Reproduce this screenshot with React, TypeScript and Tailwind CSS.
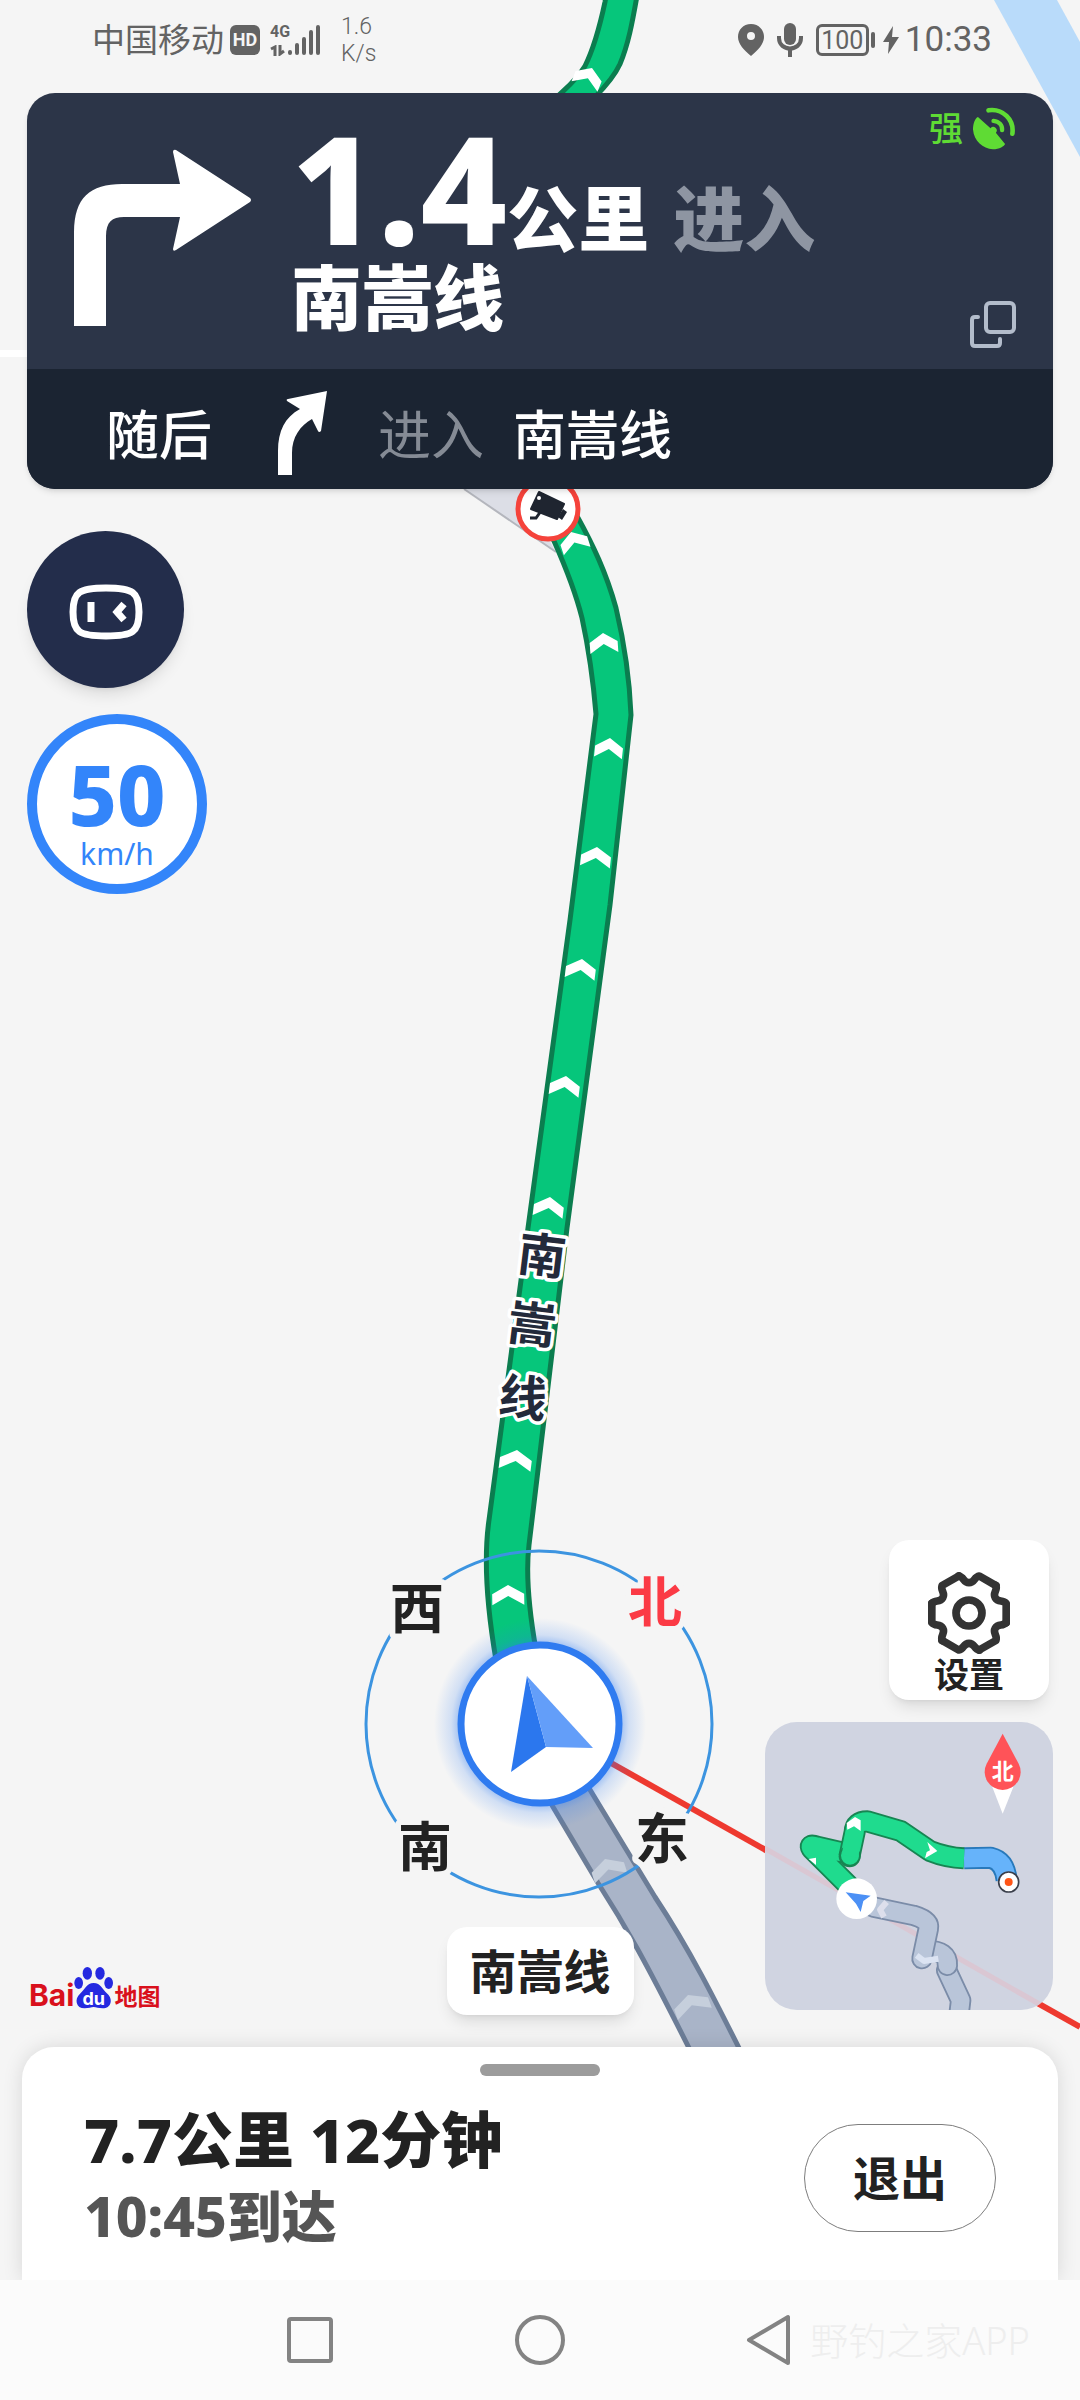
/** A white direction mark painted on the route line */
function Chevron({ x, y, angle, half = 15 }: { x: number; y: number; angle: number; half?: number }) {
  return (
    <path
      d={`M0 0L${half} 9V20L0 11L${-half} 20V9Z`}
      transform={`translate(${x} ${y}) rotate(${angle})`}
    />
  );
}

const routeMarks = [
  { x: 592, y: 68, angle: 22, half: 14 },
  { x: 571, y: 532, angle: -18, half: 14 },
  { x: 603, y: 633, angle: -4, half: 14 },
  { x: 610, y: 738, angle: 6, half: 14 },
  { x: 597, y: 847, angle: 6, half: 15 },
  { x: 582, y: 959, angle: 7, half: 15 },
  { x: 566, y: 1076, angle: 7, half: 15 },
  { x: 550, y: 1197, angle: 7, half: 15 },
  { x: 517, y: 1450, angle: 7, half: 16 },
  { x: 508, y: 1585, angle: -1, half: 16 },
];

const roadName = [
  { char: "南", x: 542, y: 1256 },
  { char: "嵩", x: 532, y: 1325 },
  { char: "线", x: 523, y: 1398 },
];

const compass = [
  { char: "西", x: 417, y: 1609, className: "fill-[#222222]" },
  { char: "北", x: 655, y: 1602, className: "fill-[#fb3a45]" },
  { char: "南", x: 425, y: 1847, className: "fill-[#222222]" },
  { char: "东", x: 662, y: 1839, className: "fill-[#222222]" },
];

/** Full-bleed navigation map behind all of the panels */
function MapCanvas() {
  return (
    <svg
      className="absolute inset-0 h-full w-full"
      viewBox="0 0 1080 2400"
      preserveAspectRatio="xMidYMin slice"
      aria-label="导航地图"
    >
      <defs>
        <radialGradient id="glow">
          <stop offset="0.72" stopColor="#2f7bf0" stopOpacity="0.55" />
          <stop offset="0.84" stopColor="#2f7bf0" stopOpacity="0.18" />
          <stop offset="1" stopColor="#2f7bf0" stopOpacity="0" />
        </radialGradient>
      </defs>

      {/* river and side roads */}
      <path d="M994 0H1057L1080 42V157Z" fill="#b9dbfa" />
      <path d="M0 350H40V357H0Z" fill="#ffffff" />
      <path d="M464 489H520L556 552Z" fill="#dcdee6" />
      <path d="M464 489L556 552" stroke="#b4b6bd" strokeWidth="2" />

      {/* route ahead */}
      <g fill="#06c67b" stroke="#0b7d4f" strokeWidth="5">
        <path d="M607 -10L605 2C599 30 594 48 585 66C575 82 566 88 556 98H594C604 88 615 75 620 64C628 45 632 25 638 -10Z" />
        <path d="M530 500L554 541C566 568 575 590 582 618C590 655 594 690 596 714L570 920L528 1228L489 1520C485 1548 484 1590 496 1660L536 1650C529 1610 526 1570 529 1545L567 1228L610 905L631 715C630 690 626 650 616 608C606 572 593 545 577 516L560 490Z" />
      </g>
      <g fill="#ffffff">
        {routeMarks.map((mark) => (
          <Chevron key={mark.y} {...mark} />
        ))}
      </g>

      {/* route already driven */}
      <path
        d="M540 1785L598 1883C625 1925 645 1960 692 2054H742C715 2000 690 1950 655 1897L575 1765Z"
        fill="#a9b4c8"
        stroke="#6c7d97"
        strokeWidth="5"
      />
      <g fill="#c6cfdc">
        <Chevron x={605} y={1859} angle={-18} half={17} />
        <Chevron x={688} y={1995} angle={-20} half={18} />
      </g>

      {/* speed camera */}
      <circle cx="548" cy="509" r="30" fill="#ffffff" stroke="#f5433b" strokeWidth="5" />
      <g fill="#1f2530">
        <path d="M539 492L564 504L557 519L531 509Z" strokeWidth="2" stroke="#1f2530" strokeLinejoin="round" />
        <path d="M563 509L567 512L562 520L558 517Z" />
        <path d="M530 518H536L541 511" fill="none" stroke="#1f2530" strokeWidth="3" />
        <circle cx="539" cy="498" r="2" fill="#ffffff" />
      </g>

      {/* bearing line to the destination */}
      <path d="M540 1723L1080 2027" stroke="#ee392f" strokeWidth="6" />

      <g
        fontSize="48"
        fontWeight="700"
        fill="#232a3b"
        stroke="#ffffff"
        strokeWidth="7"
        strokeLinejoin="round"
        textAnchor="middle"
        paintOrder="stroke"
      >
        {roadName.map(({ char, x, y }) => (
          <text key={char} dy="17" transform={`translate(${x} ${y}) rotate(7)`}>
            {char}
          </text>
        ))}
      </g>

      {/* compass ring and current position */}
      <circle cx="539" cy="1724" r="173" fill="none" stroke="#3c94e0" strokeWidth="3" />
      <g
        fontSize="54"
        fontWeight="700"
        stroke="#f5f5f5"
        strokeWidth="12"
        strokeLinejoin="round"
        textAnchor="middle"
        paintOrder="stroke"
      >
        {compass.map(({ char, x, y, className }) => (
          <text key={char} x={x} y={y + 20} className={className}>
            {char}
          </text>
        ))}
      </g>
      <circle cx="540" cy="1724" r="106" fill="url(#glow)" />
      <circle cx="540" cy="1724" r="79" fill="#ffffff" stroke="#2f7bf0" strokeWidth="7" />
      <path d="M527 1676L511 1772L546 1747Z" fill="#2b77ee" />
      <path d="M527 1676L593 1748L546 1747Z" fill="#639ef9" />
    </svg>
  );
}

function StatusBar() {
  return (
    <header className="flex h-[93px] items-start justify-between pt-3 pr-[88px] pl-[92px] text-[#636363]">
      <div className="flex h-14 items-center">
        <span className="text-[33px] leading-10">中国移动</span>
        <span className="ml-1.5 flex h-[30px] w-[30px] items-center justify-center rounded-md bg-[#636363] font-[Roboto] text-lg font-bold text-[#f5f5f5]">
          HD
        </span>
        <div className="ml-2.5 flex h-8 items-end">
          <div className="flex h-8 w-[17px] flex-col justify-between">
            <span className="font-[Roboto] text-[16px] leading-4 font-bold">4G</span>
            <svg className="h-[11px] w-[15px]" viewBox="0 0 15 11" fill="none" stroke="currentColor" strokeWidth="3">
              <path d="M1 4L5 2V11M10 0V9L14 6" />
            </svg>
          </div>
          <svg className="h-8 w-[34px]" viewBox="0 0 34 32" stroke="currentColor" strokeWidth="4" strokeLinecap="round">
            <path d="M3 29V28M10 29V21M17 29V15M24 29V8M31 29V3" />
          </svg>
        </div>
        <p className="ml-5 w-10 font-[Roboto] text-[23px] leading-[27px] font-light">
          1.6
          <br />
          K/s
        </p>
      </div>
      <div className="flex h-14 items-center">
        <svg className="h-8 w-[26px]" viewBox="0 0 26 32" fill="currentColor">
          <path fillRule="evenodd" d="M13 0C5 0 0 6 0 13C0 20 6 26 13 32C20 26 26 20 26 13C26 6 21 0 13 0ZM13 8A4 4 0 1 1 13 16A4 4 0 1 1 13 8Z" />
        </svg>
        <svg className="ml-3 h-[34px] w-7" viewBox="0 0 28 34" fill="none" stroke="currentColor">
          <rect x="8" y="0" width="12" height="22" rx="6" fill="currentColor" stroke="none" />
          <path d="M3 13V15C3 29 25 29 25 15V13M14 26V34" strokeWidth="4" />
        </svg>
        <span className="ml-3 flex h-8 w-[53px] items-center justify-center rounded-md border-3 border-[#636363] font-[Roboto] text-[25px] leading-none">
          100
        </span>
        <span className="ml-0.5 h-4 w-1 rounded-sm bg-[#636363]" />
        <svg className="ml-2 h-7 w-4" viewBox="0 0 16 28" fill="currentColor">
          <path d="M10 0L0 16H6L5 28L16 11H9Z" />
        </svg>
        <time className="ml-1.5 font-[Roboto] text-[35px] leading-[44px]">10:33</time>
      </div>
    </header>
  );
}

function SatelliteIcon() {
  return (
    <svg className="h-[43px] w-[43px]" viewBox="1115 322 130 130" fill="none" stroke="#5fdb34" strokeWidth="14" strokeLinecap="round">
      <path
        d="M1130 352L1168 386A10 10 0 0 1 1184 400L1212 434C1210 440 1195 450 1175 450C1145 448 1118 425 1115 390C1115 370 1122 355 1130 352Z"
        fill="#5fdb34"
        stroke="none"
      />
      <path d="M1177 364C1195 366 1204 378 1203 392" strokeWidth="13" />
      <path d="M1162 332C1205 326 1240 360 1234 403" strokeWidth="14" />
    </svg>
  );
}

/** Next manoeuvre card with the follow-up turn underneath */
function GuidanceCard() {
  return (
    <section className="mx-[27px] overflow-hidden rounded-[28px] bg-[#2c3548] text-white shadow-md">
      <div className="flex h-[276px] pr-[37px] pl-[47px]">
        <svg className="mt-[56px] h-[178px] w-[178px] shrink-0" viewBox="74 149 178 178" fill="#ffffff" role="img" aria-label="右转">
          <path d="M74 326V232C74 198 90 184 122 184H180L173 152Q173 149 176 150L250 198Q252 200 250 202L176 250Q173 252 173 249L180 217H124C112 217 106 222 106 236V326Z" />
        </svg>
        <div className="ml-[39px] flex-1 pt-[34px] font-extrabold">
          <h1 className="flex h-32 items-baseline text-[71px] leading-[120px]">
            <span className="text-[150px]">1.4</span>
            公里
            <span className="ml-6 text-[#8e95a2]">进入</span>
          </h1>
          <p className="text-[71px] leading-[84px]">南嵩线</p>
        </div>
        <div className="flex flex-col items-end justify-between pt-2.5 pb-5">
          <div className="flex items-center gap-2.5 text-[34px] font-medium text-[#5fdb34]">
            强
            <SatelliteIcon />
          </div>
          <button type="button" aria-label="切换视图">
            <svg className="h-12 w-12" viewBox="0 0 48 48" fill="none" stroke="#b3bccb" strokeWidth="4" strokeLinecap="round">
              <rect x="18" y="2" width="28" height="29" rx="4" />
              <path d="M10 16H7Q4 16 4 19V42Q4 45 7 45H29Q32 45 32 42V38" />
            </svg>
          </button>
        </div>
      </div>
      <div className="flex h-[120px] items-center bg-[#1b2432] pt-3 pl-[79px] text-[53px] font-medium">
        <span>随后</span>
        <svg className="mb-1 ml-[66px] h-[84px] w-[50px]" viewBox="278 390 50 84" fill="#ffffff" role="img" aria-label="右前方">
          <path d="M278 474V450C278 430 285 416 300 408L287 400Q286 398 288 398L327 390L321 430Q319 432 318 430L312 418C300 425 292 436 292 452V474Z" />
        </svg>
        <span className="ml-[50px] font-normal text-[#858b95]">进入</span>
        <span className="ml-[29px]">南嵩线</span>
      </div>
    </section>
  );
}

const gearAngles = [0, 60, 120, 180, 240, 300];

function SettingsButton() {
  return (
    <button
      type="button"
      className="mr-1 flex h-40 w-40 flex-col items-center justify-end rounded-[20px] bg-white pb-1 text-[#222222] shadow-lg"
    >
      <svg className="h-[82px] w-[82px]" viewBox="-123 -123 246 246" fill="none" stroke="#333333" strokeWidth="23" strokeLinecap="round" strokeLinejoin="round">
        <circle r="39" />
        {gearAngles.map((angle) => (
          <path key={angle} d="M-31 -111C-14 -108 -18 -91 0 -91C18 -91 14 -108 31 -111L81 -82" transform={`rotate(${angle})`} />
        ))}
      </svg>
      <span className="text-[35px] leading-[42px] font-bold">设置</span>
    </button>
  );
}

const drivenLine = ["M655 1500L662 1440L620 1350", "M560 1290Q625 1290 622 1335", "M400 1160L520 1185Q570 1200 565 1225L546 1315"];
const aheadLine = ["M330 1100L215 985Q205 970 232 979L310 997", "M328 1010L344 935Q345 903 382 903L482 932L570 992Q620 1012 672 1014"];

/** Route overview in the lower right corner */
function MiniMap() {
  return (
    <button type="button" aria-label="路线全览" className="h-72 w-72 overflow-hidden rounded-[32px] bg-[#d0d4e1]">
      <svg className="h-full w-full" viewBox="75 605 864 864" fill="none" strokeLinejoin="round">
        <path d="M60 976L940 1475" stroke="#dac7d3" strokeWidth="16" />
        {drivenLine.map((d) => (
          <g key={d} strokeLinecap="round">
            <path d={d} stroke="#7b8ca8" strokeWidth="64" />
            <path d={d} stroke="#b9c5d9" strokeWidth="53" />
          </g>
        ))}
        <path d="M440 1145L420 1168L432 1190" stroke="#dddfec" strokeWidth="18" />
        <path d="M530 1305L552 1322L595 1315" stroke="#dbe3f2" strokeWidth="18" />

        <path d="M672 1014L752 1012Q795 1022 800 1080" stroke="#2879bb" strokeWidth="66" />
        <path d="M672 1014L752 1012Q795 1022 800 1080" stroke="#66b3fa" strokeWidth="55" />
        {aheadLine.map((d) => (
          <g key={d}>
            <path d={d} stroke="#178552" strokeWidth="66" />
            <path d={d} stroke="#1fdb8e" strokeWidth="55" />
          </g>
        ))}
        <circle cx="329" cy="1008" r="33" fill="#178552" />
        <circle cx="330" cy="1006" r="27" fill="#1fdb8e" />
        <path d="M344 925L330 1008" stroke="#1fdb8e" strokeWidth="50" />
        <g fill="#ffffff">
          <path d="M320 908L345 890L362 900V932L342 918L322 928Z" />
          <path d="M562 965L592 992L555 1014L560 995L570 990Z" />
          <path d="M206 1016L228 1012V1034Z" />
        </g>

        <circle cx="806" cy="1085" r="30" fill="#ffffff" stroke="#3a3f4b" strokeWidth="5" />
        <circle cx="806" cy="1085" r="12" fill="#ff5517" />
        <circle cx="350" cy="1135" r="61" fill="#ffffff" />
        <path d="M317 1116L392 1126L370 1142L362 1175L348 1150Z" fill="#4c90f5" />

        <path d="M757 800H820L788 880Z" fill="#ffffff" />
        <path d="M788 640L836 730A54 54 0 1 1 740 730Z" fill="#ff5358" />
        <text x="788" y="775" fontSize="66" fontWeight="700" fill="#ffffff" textAnchor="middle">
          北
        </text>
      </svg>
    </button>
  );
}

function BaiduLogo() {
  return (
    <div className="mb-1.5 ml-0.5 flex items-end text-[#d9101c]">
      <span className="font-[Inter] text-[30px] leading-[27px] font-bold">Bai</span>
      <svg className="h-[42px] w-10" viewBox="0 0 120 126" fill="#2529e0">
        <ellipse cx="14" cy="48" rx="13" ry="18" />
        <ellipse cx="40" cy="19" rx="14" ry="19" />
        <ellipse cx="78" cy="19" rx="14" ry="19" />
        <ellipse cx="104" cy="48" rx="13" ry="18" />
        <path d="M59 48C80 48 85 68 100 80C118 96 112 124 86 124C74 124 66 120 59 120C52 120 44 124 32 124C6 124 0 96 18 80C33 68 38 48 59 48Z" />
        <text x="59" y="113" fontSize="54" fontWeight="700" fill="#ffffff" textAnchor="middle" fontFamily="Inter">
          du
        </text>
      </svg>
      <span className="text-[23px] leading-[26px] font-bold">地图</span>
    </div>
  );
}

function TripSheet() {
  return (
    <section className="mx-[22px] rounded-t-[32px] bg-white pt-[17px] shadow-[0_0_20px_rgba(0,0,0,0.12)]">
      <div className="mx-auto h-3 w-[120px] rounded-full bg-[#9c9c9c]" />
      <div className="flex h-[204px] items-center justify-between px-[62px]">
        <div className="font-extrabold">
          <p className="text-[61px] leading-[76px] text-[#222222]">7.7公里 12分钟</p>
          <p className="text-[55px] leading-[76px] text-[#555555]">10:45到达</p>
        </div>
        <button type="button" className="h-[108px] w-48 rounded-full border border-[#7d7d7d] text-[47px] font-bold text-[#222222]">
          退出
        </button>
      </div>
    </section>
  );
}

function SystemNav() {
  return (
    <nav className="relative flex h-[120px] items-center justify-center gap-[178px] bg-[#fbfbfb]">
      <button type="button" aria-label="最近任务">
        <svg className="h-[52px] w-[52px]" viewBox="0 0 52 52" fill="none" stroke="#838383" strokeWidth="4">
          <rect x="5" y="5" width="42" height="42" rx="2" />
        </svg>
      </button>
      <button type="button" aria-label="主屏幕">
        <svg className="h-[52px] w-[52px]" viewBox="0 0 52 52" fill="none" stroke="#838383" strokeWidth="4">
          <circle cx="26" cy="26" r="23" />
        </svg>
      </button>
      <button type="button" aria-label="返回">
        <svg className="h-[52px] w-[52px]" viewBox="0 0 52 52" fill="none" stroke="#838383" strokeWidth="4" strokeLinejoin="round">
          <path d="M44 3V49L5 26Z" />
        </svg>
      </button>
      <span className="absolute right-[50px] text-[38px] font-light text-[#eeeeee]">野钓之家APP</span>
    </nav>
  );
}

export default function App() {
  return (
    <main className="relative min-h-screen overflow-hidden bg-[#f5f5f5] font-['Noto_Sans','Noto_Sans_CJK_SC',sans-serif]">
      <MapCanvas />
      <div className="relative flex min-h-screen flex-col">
        <StatusBar />
        <GuidanceCard />

        <div className="mt-[42px] ml-[27px] flex flex-col items-start gap-[26px]">
          <button
            type="button"
            aria-label="语音助手"
            className="flex h-[157px] w-[157px] items-center justify-center rounded-full bg-[#232d4b] pt-1 shadow-lg"
          >
            <svg className="h-[58px] w-[76px]" viewBox="0 0 76 58" fill="none" stroke="#ffffff" strokeWidth="7">
              <path d="M38 5C65 5 71 9 71 29C71 49 65 53 38 53C11 53 5 49 5 29C5 9 11 5 38 5Z" />
              <path d="M23 19V39" />
              <path d="M56 21L49 29L56 37" />
            </svg>
          </button>
          <div className="flex h-[180px] w-[180px] flex-col items-center rounded-full border-[10px] border-[#3385fa] bg-white pt-7 text-[#3385fa]">
            <span className="text-[84px] leading-[84px] font-extrabold">50</span>
            <span className="text-[30px] leading-9">km/h</span>
          </div>
        </div>

        <div className="mt-auto grid grid-cols-[1fr_auto_1fr] items-end px-[27px] pb-8">
          <BaiduLogo />
          <div className="flex h-[88px] w-[187px] items-center justify-center rounded-[20px] bg-white text-[47px] font-bold text-[#222222] shadow-lg">
            南嵩线
          </div>
          <div className="mb-[5px] flex flex-col items-end gap-[22px]">
            <SettingsButton />
            <MiniMap />
          </div>
        </div>

        <TripSheet />
        <SystemNav />
      </div>
    </main>
  );
}
